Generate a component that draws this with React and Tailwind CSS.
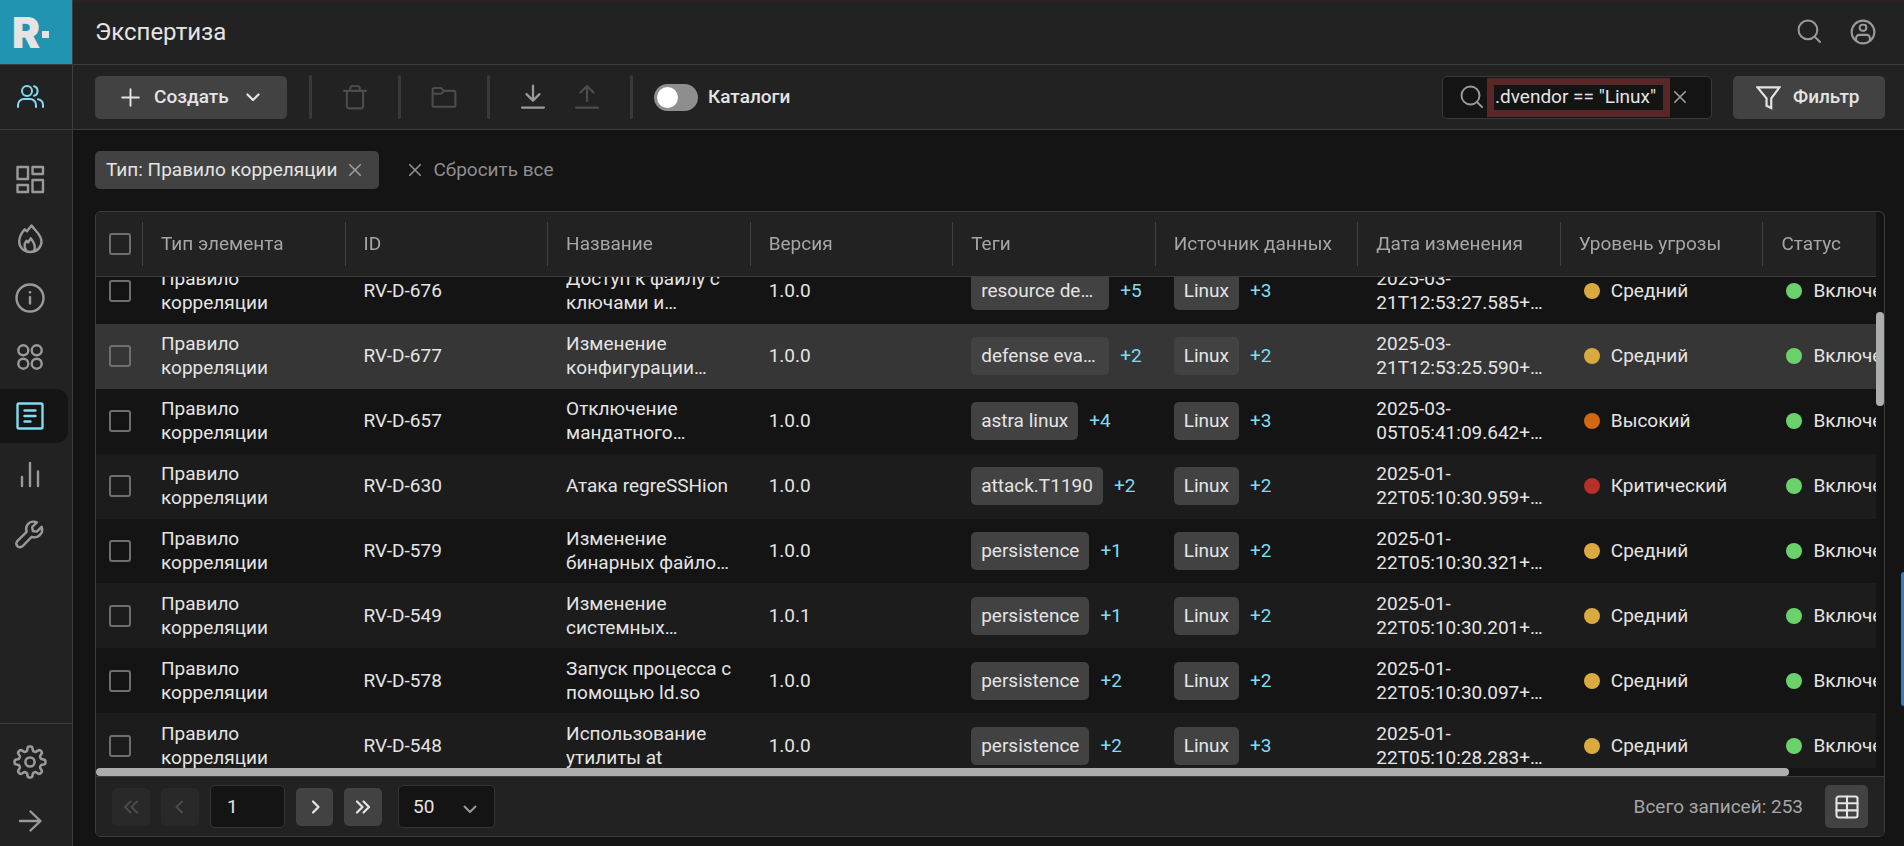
import React, { useState, useEffect, useRef } from 'react';

const Icon = ({ className = 'size-8', width = 2, children }) => (
  <svg
    className={`shrink-0 ${className}`}
    viewBox="0 0 32 32"
    fill="none"
    stroke="currentColor"
    strokeWidth={width}
    strokeLinecap="round"
    strokeLinejoin="round"
    aria-hidden="true"
  >
    {children}
  </svg>
);

// eight rounded teeth around the centre
const gearPoints = Array.from({ length: 128 }, (_, i) => {
  const angle = (i / 128) * Math.PI * 2;
  const r = 12.6 + 2 * Math.tanh(2.2 * Math.cos(angle * 8));
  return `${(16 + r * Math.sin(angle)).toFixed(2)},${(16 - r * Math.cos(angle)).toFixed(2)}`;
}).join(' ');

const icons = {
  users: (
    <>
      <circle cx="13" cy="10" r="5" />
      <path d="M4 26v-2a6 6 0 0 1 6-6h6a6 6 0 0 1 6 6v2M20 5.200a5 5 0 0 1 0 9.600M24 18.300a6 6 0 0 1 5 5.700v2" />
    </>
  ),
  dashboard: (
    <>
      <rect x="3.500" y="3" width="10.500" height="12" />
      <rect x="18.500" y="3" width="10.500" height="7" />
      <rect x="3.500" y="21" width="10.500" height="7" />
      <rect x="18.500" y="16" width="10.500" height="12" />
    </>
  ),
  flame: (
    <>
      <path d="M17.500 2.500l-4.500 5.800-2.300-2C7.500 10 5.200 14 5.200 18.500 5.200 24.500 9.800 29 16.200 29S27.500 24.500 27.500 18.500C27.500 12 21.500 8 17.500 2.500z" />
      <path d="M12.500 28c-2.500-3.700-2.400-7.200 0-10.200l1.600 1.700 2.600-4.200c3.300 4 5.800 8 3.300 12.700" />
    </>
  ),
  info: (
    <>
      <circle cx="16" cy="16" r="13.500" />
      <path d="M16 15v6.500M15.800 10.300h.4" />
    </>
  ),
  circles: (
    <>
      <circle cx="9.300" cy="9.300" r="5" />
      <circle cx="22.700" cy="9.300" r="5" />
      <circle cx="9.300" cy="22.700" r="5" />
      <circle cx="22.700" cy="22.700" r="5" />
    </>
  ),
  article: (
    <>
      <rect x="3.500" y="3.500" width="25" height="25" rx="1.500" />
      <path d="M10.500 10.500h11M10.500 16h11M10.500 21.500h6" />
    </>
  ),
  bars: <path d="M8 18v9M16 4v23M24 12.500v14.500" />,
  wrench: (
    <path d="M27.600 8.800l-4.800 4.800-4-.6-.6-4 4.700-4.700c-3.500-1.300-7.400-.4-9.300 2.200-1.700 2.300-1.800 4.800-1 7.300L3.500 22.900c-1.600 1.600-1.600 3.900-.2 5.300s3.900 1.400 5.400-.2l9-9.200c2.600.9 5.500.6 7.700-1.300 2.600-2.200 3.300-5.800 2.200-8.700z" />
  ),
  gear: (
    <>
      <polygon points={gearPoints} />
      <circle cx="16" cy="16" r="4.300" />
    </>
  ),
  arrow: <path d="M6 16h20M16.500 6.500l10 9.500-10 9.500" />,
  search: (
    <>
      <circle cx="14" cy="14" r="12" />
      <path d="M23 23l6.500 6.500" />
    </>
  ),
  user: (
    <>
      <circle cx="16" cy="16" r="14" />
      <rect x="12" y="7" width="8" height="7.500" rx="3" />
      <path d="M7.500 26v-2.500a4 4 0 0 1 4-4h9a4 4 0 0 1 4 4V26" />
    </>
  ),
  plus: <path d="M16 2v28M2 16h28" />,
  down: <path d="M5 11l11 11 11-11" />,
  trash: <path d="M2.500 8.500h27M6 8.500V27a3 3 0 0 0 3 3h14a3 3 0 0 0 3-3V8.500M10 8.500V6a3.500 3.500 0 0 1 3.500-3.500h5A3.500 3.500 0 0 1 22 6v2.500" />,
  folder: (
    <path d="M2 12V7a2 2 0 0 1 2-2h8.500l3.500 3.500h12a2 2 0 0 1 2 2V26a2 2 0 0 1-2 2H4a2 2 0 0 1-2-2V12h10.500l3.500-3.500" />
  ),
  download: <path d="M16 2v18M8 12.500l8 8 8-8M2.500 29h27" />,
  upload: <path d="M16 21V3M8 10.500l8-8 8 8M2.500 29h27" />,
  close: <path d="M4 4l24 24M28 4L4 28" />,
  filter: <path d="M2 3h28L19.500 17v12.500l-6-3V17z" strokeLinejoin="miter" />,
  left: <path d="M20 5L9 16l11 11" />,
  right: <path d="M12 5l11 11-11 11" />,
  first: <path d="M15 5L4 16l11 11M28 5L17 16l11 11" />,
  last: <path d="M4 5l11 11L4 27M17 5l11 11-11 11" />,
  table: (
    <>
      <rect x="2" y="2" width="28" height="28" rx="3" />
      <path d="M2 11h28M2 20.500h28M16 2v28" />
    </>
  ),
};

const navItems = [
  { id: 'dashboard', label: 'Дашборды' },
  { id: 'flame', label: 'Инциденты' },
  { id: 'info', label: 'Информация' },
  { id: 'circles', label: 'Активы' },
  { id: 'article', label: 'Экспертиза' },
  { id: 'bars', label: 'Отчёты' },
  { id: 'wrench', label: 'Инструменты' },
];

const columns = [
  'Тип элемента',
  'ID',
  'Название',
  'Версия',
  'Теги',
  'Источник данных',
  'Дата изменения',
  'Уровень угрозы',
  'Статус',
];

const rows = [
  { id: 'RV-D-676', name: 'Доступ к файлу с\nключами и…', version: '1.0.0', tag: 'resource de…', tagMore: 5, srcMore: 3, date: '2025-03-\n21T12:53:27.585+…', level: 'Средний' },
  { id: 'RV-D-677', name: 'Изменение\nконфигурации…', version: '1.0.0', tag: 'defense eva…', tagMore: 2, srcMore: 2, date: '2025-03-\n21T12:53:25.590+…', level: 'Средний', active: true },
  { id: 'RV-D-657', name: 'Отключение\nмандатного…', version: '1.0.0', tag: 'astra linux', tagMore: 4, srcMore: 3, date: '2025-03-\n05T05:41:09.642+…', level: 'Высокий' },
  { id: 'RV-D-630', name: 'Атака regreSSHion', version: '1.0.0', tag: 'attack.T1190', tagMore: 2, srcMore: 2, date: '2025-01-\n22T05:10:30.959+…', level: 'Критический' },
  { id: 'RV-D-579', name: 'Изменение\nбинарных файло…', version: '1.0.0', tag: 'persistence', tagMore: 1, srcMore: 2, date: '2025-01-\n22T05:10:30.321+…', level: 'Средний' },
  { id: 'RV-D-549', name: 'Изменение\nсистемных…', version: '1.0.1', tag: 'persistence', tagMore: 1, srcMore: 2, date: '2025-01-\n22T05:10:30.201+…', level: 'Средний' },
  { id: 'RV-D-578', name: 'Запуск процесса с\nпомощью ld.so', version: '1.0.0', tag: 'persistence', tagMore: 2, srcMore: 2, date: '2025-01-\n22T05:10:30.097+…', level: 'Средний' },
  { id: 'RV-D-548', name: 'Использование\nутилиты at', version: '1.0.0', tag: 'persistence', tagMore: 2, srcMore: 3, date: '2025-01-\n22T05:10:28.283+…', level: 'Средний' },
];

const levelColors = {
  'Средний': 'bg-[#daa93f]',
  'Высокий': 'bg-[#d16814]',
  'Критический': 'bg-[#b62f28]',
};

const Divider = () => <span className="h-11 w-[3px] shrink-0 rounded-full bg-[#3a3a3a]" />;

const Checkbox = ({ label }) => (
  <input
    type="checkbox"
    aria-label={label}
    className="block size-[22px] appearance-none rounded-[3px] border-2 border-[#6e6e6e] checked:bg-[#7fdcf3]"
  />
);

const Tag = ({ text, more, wide }) => (
  <div className="flex items-center gap-[11px]">
    <span className={`flex h-[38px] items-center rounded-[5px] bg-[#424242] px-[10px] whitespace-nowrap ${wide ? 'w-[138px]' : ''}`}>
      {text}
    </span>
    <button className="text-[#7fdcf3]">+{more}</button>
  </div>
);

const Level = ({ color, text }) => (
  <div className="flex items-center gap-[11px] pl-[5px] whitespace-nowrap">
    <span className={`size-4 shrink-0 rounded-full ${color}`} />
    {text}
  </div>
);

const Sidebar = () => (
  <aside className="flex w-[73px] shrink-0 flex-col border-r border-[#3d3d3d] bg-[#222222] text-[#9a9a9a]">
    <a href="#home" aria-label="R." className="flex h-16 shrink-0 items-center gap-[2px] bg-[#2194b1] pt-px pl-3 font-[Inter,sans-serif] text-[42px] leading-none font-black text-[#e4e4e4]">
      R
      <span className="mt-1 size-[7px] bg-[#e4e4e4]" />
    </a>
    <button aria-label="Пользователи" className="flex h-[66px] shrink-0 items-center border-y border-[#3d3d3d] pl-[14px] text-[#7fdcf3]">
      <Icon width={2}>{icons.users}</Icon>
    </button>
    <nav className="flex flex-1 flex-col gap-[5px] pt-[23px]">
      {navItems.map((item) => (
        <a
          key={item.id}
          href={`#${item.id}`}
          aria-label={item.label}
          className={`flex h-[54px] w-[68px] items-center rounded-r-xl pl-[14px] ${item.id === 'article' ? 'bg-[#141414] text-[#7fdcf3]' : ''}`}
        >
          <Icon width={2.4}>{icons[item.id]}</Icon>
        </a>
      ))}
    </nav>
    <div className="flex h-[123px] shrink-0 flex-col gap-[5px] border-t border-[#3d3d3d] pt-[11px]">
      <button aria-label="Настройки" className="flex h-[54px] shrink-0 items-center pl-[13px]">
        <Icon className="size-[34px]" width={2.4}>{icons.gear}</Icon>
      </button>
      <button aria-label="Развернуть" className="flex h-[54px] shrink-0 items-center pl-[14px]">
        <Icon width={2.4}>{icons.arrow}</Icon>
      </button>
    </div>
  </aside>
);

const Toolbar = () => {
  const [query, setQuery] = useState('.dvendor == "Linux"');
  const [catalogs, setCatalogs] = useState(false);

  return (
    <div className="flex h-[65px] shrink-0 items-center border-b border-[#3d3d3d] bg-[#222222] pr-[19px] pl-[22px]">
      <button className="flex h-[43px] w-[192px] shrink-0 items-center rounded-[5px] bg-[#424242] pl-[26px] font-medium">
        <Icon className="mr-[14px] size-[19px]" width={3.2}>{icons.plus}</Icon>
        Создать
        <Icon className="ml-4 size-4" width={4.5}>{icons.down}</Icon>
      </button>
      <div className="ml-[22px] flex items-center gap-[30px] text-[#4c4c4c]">
        <Divider />
        <button aria-label="Удалить"><Icon className="size-[26px]" width={2.6}>{icons.trash}</Icon></button>
        <Divider />
        <button aria-label="Переместить"><Icon className="size-[26px]" width={2.6}>{icons.folder}</Icon></button>
        <Divider />
        <div className="flex gap-7">
          <button aria-label="Скачать" className="text-[#9a9a9a]"><Icon className="size-[26px]" width={2.8}>{icons.download}</Icon></button>
          <button aria-label="Загрузить"><Icon className="size-[26px]" width={2.8}>{icons.upload}</Icon></button>
        </div>
        <Divider />
      </div>
      <label className="ml-[21px] flex items-center gap-[10px] font-medium">
        <input
          type="checkbox"
          role="switch"
          checked={catalogs}
          onChange={(e) => setCatalogs(e.target.checked)}
          className="h-[27px] w-11 appearance-none rounded-full bg-[#8e8e8e] p-[3px] before:block before:size-[21px] before:rounded-full before:bg-white checked:bg-[#2194b1] checked:before:ml-[17px]"
        />
        Каталоги
      </label>
      <div className="ml-auto flex h-[43px] w-[270px] items-center rounded-[5px] border border-[#3a3a3a] bg-[#141414] pl-[17px] text-[#9a9a9a]">
        <Icon className="size-6" width={2.6}>{icons.search}</Icon>
        <span className="ml-[3px] flex h-[39px] w-[183px] items-center border-[7px] border-[#5a2727]">
          <input
            type="text"
            aria-label="Поиск"
            value={query}
            onChange={(e) => setQuery(e.target.value)}
            className="w-full bg-transparent pl-px text-[#e4e4e4] outline-none"
          />
        </span>
        <button aria-label="Очистить" className="ml-[3px]" onClick={() => setQuery('')}>
          <Icon className="size-[14px]" width={4}>{icons.close}</Icon>
        </button>
      </div>
      <button className="ml-[21px] flex h-[43px] w-[152px] items-center gap-3 rounded-[5px] bg-[#424242] pl-[23px] font-medium">
        <Icon className="size-[25px]" width={2.8}>{icons.filter}</Icon>
        Фильтр
      </button>
    </div>
  );
};

const RulesTable = () => {
  const scroller = useRef(null);

  useEffect(() => {
    scroller.current.scrollTop = 18;
  }, []);

  return (
    <div className="grid min-h-0 flex-1 grid-cols-[minmax(0,1fr)_8px] grid-rows-[minmax(0,1fr)_8px]">
      <div ref={scroller} className="overflow-auto [scrollbar-width:none]">
        <table className="h-[584px] w-[1869px] table-fixed border-separate border-spacing-0 text-left">
          <thead className="sticky top-0 z-10 bg-[#222222] text-[#a6a6a6]">
            <tr>
              <th className="h-[65px] w-[46px] border-b border-[#3d3d3d] pl-[13px]"><Checkbox label="Выбрать все" /></th>
              {columns.map((col) => (
                <th key={col} className="h-[65px] border-b border-[#3d3d3d] font-normal">
                  <div className="flex h-11 items-center border-l border-[#414141] pl-[18px] whitespace-nowrap">{col}</div>
                </th>
              ))}
            </tr>
          </thead>
          <tbody>
            {rows.map((row) => (
              <tr key={row.id} className={row.active ? 'bg-[#363636]' : 'even:bg-[#1c1c1c]'}>
                <td className="pl-[13px]"><Checkbox label={row.id} /></td>
                <td className="pl-[19px] whitespace-pre-line">{'Правило\nкорреляции'}</td>
                <td className="pl-[19px]">{row.id}</td>
                <td className="pl-[19px] whitespace-pre">{row.name}</td>
                <td className="pl-[19px]">{row.version}</td>
                <td className="pl-[19px]"><Tag text={row.tag} more={row.tagMore} wide={row.tag.endsWith('…')} /></td>
                <td className="pl-[19px]"><Tag text="Linux" more={row.srcMore} /></td>
                <td className="pl-[19px] whitespace-pre">{row.date}</td>
                <td className="pl-[19px]"><Level color={levelColors[row.level]} text={row.level} /></td>
                <td className="pl-[19px]"><Level color="bg-[#6bd16b]" text="Включено" /></td>
              </tr>
            ))}
          </tbody>
        </table>
      </div>
      <div className="pt-[100px]">
        <div className="h-[94px] rounded-full bg-[#adadad]" />
      </div>
      <div>
        <div className="h-2 w-[1693px] max-w-full rounded-full bg-[#adadad]" />
      </div>
    </div>
  );
};

const Pager = () => {
  const [page, setPage] = useState('1');

  return (
    <footer className="flex h-[60px] shrink-0 items-center gap-[11px] border-t border-[#3d3d3d] bg-[#222222] pr-4 pl-4">
      <button disabled aria-label="Первая" className="flex size-[38px] items-center justify-center rounded-[5px] bg-[#292929] text-[#4c4c4c]">
        <Icon className="size-4" width={4}>{icons.first}</Icon>
      </button>
      <button disabled aria-label="Назад" className="flex size-[38px] items-center justify-center rounded-[5px] bg-[#292929] text-[#4c4c4c]">
        <Icon className="size-4" width={4}>{icons.left}</Icon>
      </button>
      <input
        type="text"
        aria-label="Страница"
        value={page}
        onChange={(e) => setPage(e.target.value)}
        className="h-[43px] w-[75px] rounded-[5px] border border-[#343434] bg-[#141414] pl-4 outline-none"
      />
      <button aria-label="Вперёд" className="flex h-[38px] w-[37px] items-center justify-center rounded-[5px] bg-[#424242]">
        <Icon className="size-4" width={4.5}>{icons.right}</Icon>
      </button>
      <button aria-label="Последняя" className="flex size-[38px] items-center justify-center rounded-[5px] bg-[#424242]">
        <Icon className="size-4" width={4.5}>{icons.last}</Icon>
      </button>
      <div className="ml-[5px] grid h-[43px] w-[97px] items-center rounded-[5px] border border-[#343434] bg-[#141414]">
        <select aria-label="Записей на странице" className="col-start-1 row-start-1 h-full w-full appearance-none bg-transparent pl-[14px] outline-none">
          <option>50</option>
          <option>100</option>
        </select>
        <Icon className="pointer-events-none col-start-1 row-start-1 mt-1 mr-4 size-4 justify-self-end text-[#9a9a9a]" width={4}>{icons.down}</Icon>
      </div>
      <span className="ml-auto text-[#a6a6a6]">Всего записей: 253</span>
      <button aria-label="Колонки" className="ml-[11px] flex size-[43px] items-center justify-center rounded-[5px] bg-[#424242]">
        <Icon className="size-6" width={2.8}>{icons.table}</Icon>
      </button>
    </footer>
  );
};

export default function App() {
  return (
    <div className="flex h-screen overflow-hidden bg-[#141414] font-[Roboto,sans-serif] text-[19px] leading-6 text-[#e4e4e4]">
      <Sidebar />
      <main className="flex min-w-0 flex-1 flex-col">
        <header className="flex h-[65px] shrink-0 items-center gap-7 border-t-2 border-b border-t-[#2b2022] border-b-[#3d3d3d] bg-[#222222] pr-7 pb-[3px] pl-[22px] text-[#9a9a9a]">
          <h1 className="mr-auto text-2xl text-[#e4e4e4]">Экспертиза</h1>
          <button aria-label="Поиск"><Icon className="size-[25px]" width={2.6}>{icons.search}</Icon></button>
          <button aria-label="Профиль"><Icon className="size-[26px]" width={2.6}>{icons.user}</Icon></button>
        </header>
        <Toolbar />
        <section className="flex min-h-0 flex-1 flex-col pt-[21px] pr-[19px] pb-[9px] pl-[22px]">
          <div className="mb-[22px] flex items-center gap-[29px]">
            <span className="flex h-[38px] items-center gap-[11px] rounded-[5px] bg-[#424242] pr-[17px] pl-[11px]">
              Тип: Правило корреляции
              <button aria-label="Убрать фильтр" className="text-[#9a9a9a]"><Icon className="size-[14px]" width={4}>{icons.close}</Icon></button>
            </span>
            <button className="flex items-center gap-[11px] text-[#8e8e8e]">
              <Icon className="size-[14px]" width={4}>{icons.close}</Icon>
              Сбросить все
            </button>
          </div>
          <div className="flex min-h-0 flex-1 flex-col overflow-hidden rounded-md border border-[#3d3d3d]">
            <RulesTable />
            <Pager />
          </div>
        </section>
      </main>
      {/* side handle, sits over the page edge */}
      <button aria-label="Открыть панель" className="fixed top-[572px] right-0 h-[134px] w-[3px] rounded-l bg-[#2f7fc8]" />
    </div>
  );
}
